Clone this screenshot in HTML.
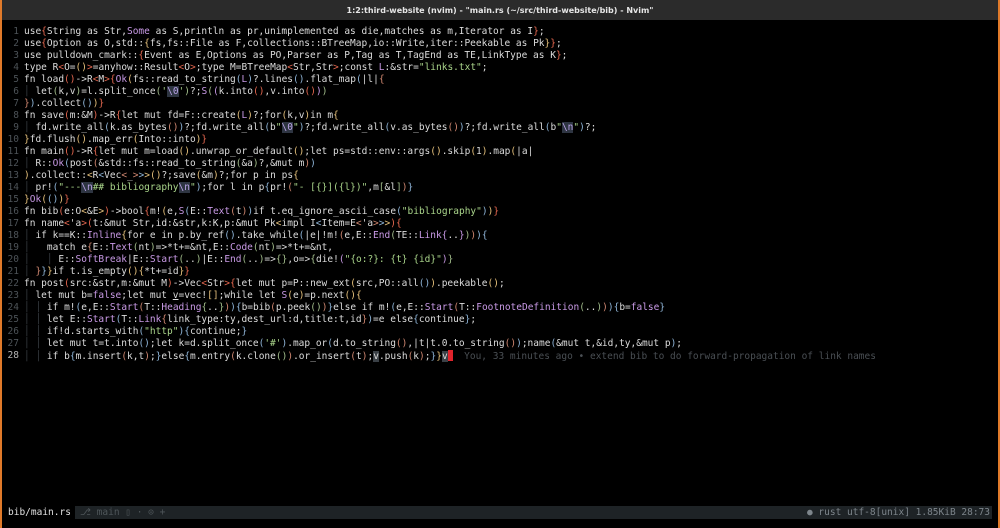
<!DOCTYPE html>
<html><head><meta charset="utf-8">
<style>
html,body{margin:0;padding:0;background:#000;width:1000px;height:528px;overflow:hidden;}
#title{position:absolute;left:0;top:0;width:1000px;height:20px;background:#2b2b2b;color:#e6e6e6;font:bold 8px "DejaVu Sans","Liberation Sans",sans-serif;text-align:center;line-height:21px;}
.bl{position:absolute;top:0;bottom:0;width:2px;background:#e07a2a;}
#code{position:absolute;left:0;top:26px;font-family:"DejaVu Sans Mono","Liberation Mono",monospace;font-size:9.5px;line-height:12px;color:#dcdcdc;white-space:pre;}
.ln{position:absolute;left:0;width:19px;text-align:right;color:#4d5358;}
.tx{position:absolute;left:24px;}
.g{color:#3a3f44}
.s{color:#a9d48a}
.e{background:#2e3542;color:#b9a3e6}
.p{color:#c99ae6}
.vt{color:#4a4f54}
#sl{position:absolute;left:0;top:506px;width:1000px;height:13px;font-family:"DejaVu Sans Mono","Liberation Mono",monospace;font-size:9.5px;line-height:13px;white-space:pre;}
</style></head><body>
<div id="title">1:2:third-website (nvim) - "main.rs (~/src/third-website/bib) - Nvim"</div>
<div id="code">
<div class="row"><span class="ln">1</span><span class="tx">use{String as Str,Some as S,println as pr,unimplemented as die,matches as m,Iterator as I};</span></div>
<div class="row"><span class="ln">2</span><span class="tx">use{Option as O,std::{fs,fs::File as F,collections::BTreeMap,io::Write,iter::Peekable as Pk}};</span></div>
<div class="row"><span class="ln">3</span><span class="tx">use pulldown_cmark::{Event as E,Options as PO,Parser as P,Tag as T,TagEnd as TE,LinkType as K};</span></div>
<div class="row"><span class="ln">4</span><span class="tx">type R&lt;O=()&gt;=anyhow::Result&lt;O&gt;;type M=BTreeMap&lt;Str,Str&gt;;const L:&amp;str="links.txt";</span></div>
<div class="row"><span class="ln">5</span><span class="tx">fn load()-&gt;R&lt;M&gt;{Ok(fs::read_to_string(L)?.lines().flat_map(|l|{</span></div>
<div class="row"><span class="ln">6</span><span class="tx">│ let(k,v)=l.split_once('\0')?;S((k.into(),v.into()))</span></div>
<div class="row"><span class="ln">7</span><span class="tx">}).collect())}</span></div>
<div class="row"><span class="ln">8</span><span class="tx">fn save(m:&amp;M)-&gt;R{let mut fd=F::create(L)?;for(k,v)in m{</span></div>
<div class="row"><span class="ln">9</span><span class="tx">│ fd.write_all(k.as_bytes())?;fd.write_all(b"\0")?;fd.write_all(v.as_bytes())?;fd.write_all(b"\n")?;</span></div>
<div class="row"><span class="ln">10</span><span class="tx">}fd.flush().map_err(Into::into)}</span></div>
<div class="row"><span class="ln">11</span><span class="tx">fn main()-&gt;R{let mut m=load().unwrap_or_default();let ps=std::env::args().skip(1).map(|a|</span></div>
<div class="row"><span class="ln">12</span><span class="tx">│ R::Ok(post(&amp;std::fs::read_to_string(&amp;a)?,&amp;mut m))</span></div>
<div class="row"><span class="ln">13</span><span class="tx">).collect::&lt;R&lt;Vec&lt;_&gt;&gt;&gt;()?;save(&amp;m)?;for p in ps{</span></div>
<div class="row"><span class="ln">14</span><span class="tx">│ pr!("---\n## bibliography\n");for l in p{pr!("- [{}]({l})",m[&amp;l])}</span></div>
<div class="row"><span class="ln">15</span><span class="tx">}Ok(())}</span></div>
<div class="row"><span class="ln">16</span><span class="tx">fn bib(e:O&lt;&amp;E&gt;)-&gt;bool{m!(e,S(E::Text(t))if t.eq_ignore_ascii_case("bibliography"))}</span></div>
<div class="row"><span class="ln">17</span><span class="tx">fn name&lt;'a&gt;(t:&amp;mut Str,id:&amp;str,k:K,p:&amp;mut Pk&lt;impl I&lt;Item=E&lt;'a&gt;&gt;&gt;){</span></div>
<div class="row"><span class="ln">18</span><span class="tx">│ if k==K::Inline{for e in p.by_ref().take_while(|e|!m!(e,E::End(TE::Link{..}))){</span></div>
<div class="row"><span class="ln">19</span><span class="tx">│   match e{E::Text(nt)=&gt;*t+=&amp;nt,E::Code(nt)=&gt;*t+=&amp;nt,</span></div>
<div class="row"><span class="ln">20</span><span class="tx">│   │ E::SoftBreak|E::Start(..)|E::End(..)=&gt;{},o=&gt;{die!("{o:?}: {t} {id}")}</span></div>
<div class="row"><span class="ln">21</span><span class="tx">│ }}}if t.is_empty(){*t+=id}}</span></div>
<div class="row"><span class="ln">22</span><span class="tx">fn post(src:&amp;str,m:&amp;mut M)-&gt;Vec&lt;Str&gt;{let mut p=P::new_ext(src,PO::all()).peekable();</span></div>
<div class="row"><span class="ln">23</span><span class="tx">│ let mut b=false;let mut v=vec![];while let S(e)=p.next(){</span></div>
<div class="row"><span class="ln">24</span><span class="tx">│ │ if m!(e,E::Start(T::Heading{..})){b=bib(p.peek())}else if m!(e,E::Start(T::FootnoteDefinition(..))){b=false}</span></div>
<div class="row"><span class="ln">25</span><span class="tx">│ │ let E::Start(T::Link{link_type:ty,dest_url:d,title:t,id})=e else{continue};</span></div>
<div class="row"><span class="ln">26</span><span class="tx">│ │ if!d.starts_with("http"){continue;}</span></div>
<div class="row"><span class="ln">27</span><span class="tx">│ │ let mut t=t.into();let k=d.split_once('#').map_or(d.to_string(),|t|t.0.to_string());name(&amp;mut t,&amp;id,ty,&amp;mut p);</span></div>
<div class="row"><span class="ln">28</span><span class="tx">│ │ if b{m.insert(k,t);}else{m.entry(k.clone()).or_insert(t);v.push(k);}}v</span></div>
</div>
<div id="sl"><span style="position:absolute;left:8px;color:#e0e0e0">bib/main.rs</span><span style="position:absolute;left:75px;right:8px;top:0;height:13px;background:#1e2326"></span><span style="position:absolute;left:80px;color:#4e5559">⎇ main ▯ · ⊙ +</span><span style="position:absolute;right:10px;color:#7d858b">● rust utf-8[unix] 1.85KiB 28:73</span></div>
<div class="bl" style="left:0"></div><div class="bl" style="right:0"></div>
<script>
(function(){
var pal=['#e5674f','#e5c07b','#8fb5d8','#d08770','#a3be8c','#c99ae6'];
var purple={Some:1,Ok:1,Text:1,Code:1,SoftBreak:1,Start:1,End:1,Heading:1,Link:1,FootnoteDefinition:1,Inline:1,false:1,L:1};
var depth=0;
function esc(c){return c.replace(/&/g,'&amp;').replace(/</g,'&lt;').replace(/>/g,'&gt;');}
var rows=document.querySelectorAll('.row');
rows.forEach(function(r,ri){
 var tx=r.querySelector('.tx');var s=tx.textContent;var o='';var i=0;
 r.style.position='absolute';r.style.top=(ri*12)+'px';r.style.left='0';r.style.width='1000px';r.style.height='12px';
 while(i<s.length){
  var c=s[i];
  if(c=='│'){o+='<span class="g">│</span>';i++;continue;}
  if(c=='"'){var j=i+1,str='"';
   while(j<s.length&&s[j]!='"'){if(s[j]=='\\'){str+='<span class="e">'+esc(s.substr(j,2))+'</span>';j+=2;}else{str+=esc(s[j]);j++;}}
   str+='"';o+='<span class="s">'+str+'</span>';i=j+1;continue;}
  if(c=="'"){var m=s.substr(i).match(/^'(\\.|[^'])'/);
   if(m){var inner=m[1].length>1?'<span class="e">'+esc(m[1])+'</span>':esc(m[1]);o+='<span class="s">\''+inner+'\'</span>';i+=m[0].length;continue;}}
  if('({[<'.indexOf(c)>=0){o+='<span style="color:'+pal[depth%pal.length]+'">'+esc(c)+'</span>';depth++;i++;continue;}
  if(')}]'.indexOf(c)>=0||(c=='>'&&s[i-1]!='-'&&s[i-1]!='=')){depth=Math.max(0,depth-1);o+='<span style="color:'+pal[depth%pal.length]+'">'+esc(c)+'</span>';i++;continue;}
  var w=s.substr(i).match(/^[A-Za-z_][A-Za-z0-9_]*/);
  if(w){var word=w[0];
   if(purple[word]||(word=='S'&&(s[i+word.length]=='('||s.substr(i-4,4)=='as S'.slice(0,4)&&false)))o+='<span class="p">'+word+'</span>';
   else if(word=='S'&&s.substr(i-3,3)==' as')o+='<span class="p">S</span>';
   else o+=word;
   i+=word.length;continue;}
  o+=esc(c);i++;
 }
 if(ri==27){
  o=o.replace(/v$/,'');
  o=o.replace(/v\.push/,'<span style="background:#3a4046">v</span>.push');
  o+='<span style="background:#3a4046">v</span><span style="display:inline-block;width:5px;height:11px;vertical-align:-2px;background:#e0242c"></span><span class="vt">  You, 33 minutes ago • extend bib to do forward-propagation of link names</span>';
  r.querySelector('.ln').style.color='#b5b5b5';
 }
 if(ri==22){o=o.replace('let mut v=','let mut <span style="text-decoration:underline">v</span>=');}
 tx.innerHTML=o;
});
})();
</script>
</body></html>
